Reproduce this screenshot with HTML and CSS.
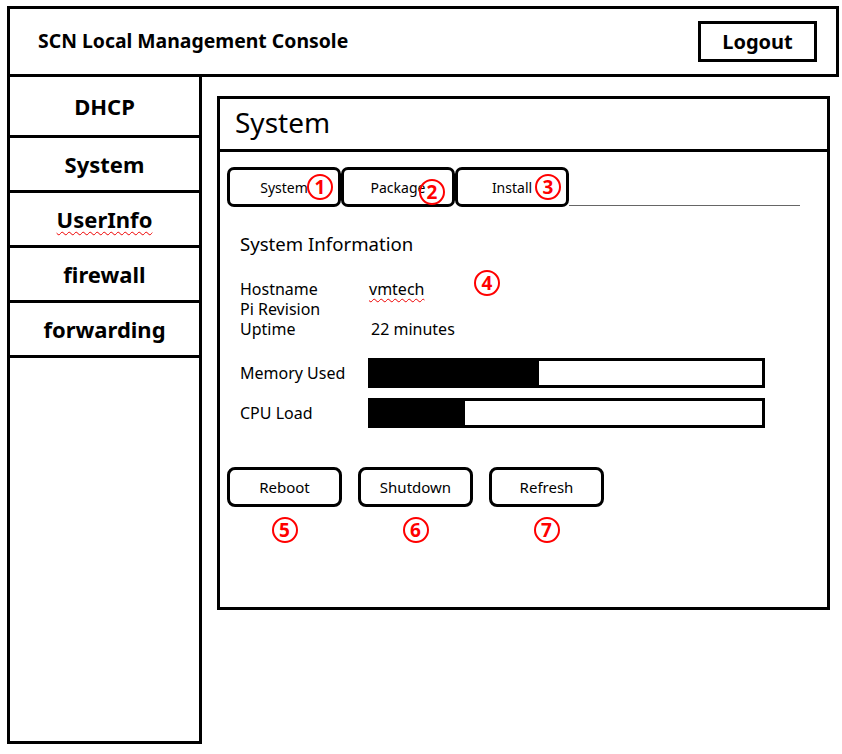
FILE: index.html
```html
<!DOCTYPE html>
<html lang="en">
<head>
    <meta charset="UTF-8">
    <meta name="viewport" content="width=device-width, initial-scale=1.0">
    <title>SCN Local Management Console</title>
    <link rel="stylesheet" href="styles.css">
</head>
<body>
    <div class="page">
        <div class="header">
            <div class="brand">SCN Local Management Console</div>
            <button class="logout">Logout</button>
        </div>
        <div class="layout">
            <div class="sidebar">
                <a class="nav-item nav-first">DHCP</a>
                <a class="nav-item">System</a>
                <a class="nav-item"><span class="misspelled">UserInfo</span></a>
                <a class="nav-item">firewall</a>
                <a class="nav-item">forwarding</a>
            </div>
            <div class="panel">
                <div class="panel-title">System</div>
                <div class="panel-body">
                    <div class="tabs">
                        <div class="tab">System<span class="mark">1</span></div>
                        <div class="tab">Package<span class="mark low">2</span></div>
                        <div class="tab">Install<span class="mark">3</span></div>
                        <div class="tab-line"></div>
                    </div>
                    <div class="info">
                        <h2>System Information</h2>
                        <div class="info-grid">
                            <span>Hostname</span><span><span class="misspelled">vmtech</span></span>
                            <span>Pi Revision</span><span></span>
                            <span>Uptime</span><span class="uptime">22 minutes</span>
                        </div>
                        <span class="mark info-mark">4</span>
                    </div>
                    <div class="usage">
                        <span>Memory Used</span>
                        <div class="bar"><div class="bar-fill" style="width: 43%"></div></div>
                        <span>CPU Load</span>
                        <div class="bar"><div class="bar-fill" style="width: 24%"></div></div>
                    </div>
                    <div class="actions">
                        <div class="action">
                            <button class="btn">Reboot</button>
                            <span class="mark">5</span>
                        </div>
                        <div class="action">
                            <button class="btn">Shutdown</button>
                            <span class="mark">6</span>
                        </div>
                        <div class="action">
                            <button class="btn">Refresh</button>
                            <span class="mark">7</span>
                        </div>
                    </div>
                </div>
            </div>
        </div>
    </div>
</body>
</html>
```

FILE: styles.css
```css
body {
    margin: 0;
    font-family: "Noto Sans", "Open Sans", sans-serif;
    color: #000;
    background: #fff;
}
.page {
    padding: 6px 0 0 7px;
    width: 832px;
}
.header {
    box-sizing: border-box;
    height: 71px;
    border: 3px solid #000;
    display: flex;
    align-items: center;
    justify-content: space-between;
    padding: 0 19px 0 28px;
}
.brand {
    font-size: 19.4px;
    font-weight: 700;
    margin-top: -3px;
}
.logout {
    box-sizing: border-box;
    width: 119px;
    height: 41px;
    padding: 0;
    border: 3px solid #000;
    background: #fff;
    color: #000;
    font-family: inherit;
    font-size: 20px;
    font-weight: 700;
}
.layout {
    display: flex;
    align-items: flex-start;
}
.sidebar {
    box-sizing: border-box;
    width: 195px;
    height: 667px;
    border: 3px solid #000;
    border-top: none;
    display: flex;
    flex-direction: column;
}
.nav-item {
    height: 52px;
    border-bottom: 3px solid #000;
    display: flex;
    align-items: center;
    justify-content: center;
    font-size: 22px;
    font-weight: 700;
}
.nav-first {
    height: 58px;
}
.misspelled {
    text-decoration: underline wavy #e00;
    text-decoration-thickness: 1px;
    text-underline-offset: 3px;
}
.panel {
    box-sizing: border-box;
    width: 613px;
    height: 514px;
    margin: 19px 0 0 15px;
    border: 3px solid #000;
}
.panel-title {
    height: 50px;
    line-height: 46px;
    padding-left: 15px;
    border-bottom: 3px solid #000;
    font-size: 28px;
}
.panel-body {
    padding: 15px 0 0 7px;
}
.tabs {
    display: flex;
    align-items: flex-end;
}
.tab {
    position: relative;
    box-sizing: border-box;
    width: 114px;
    height: 40px;
    border: 3px solid #000;
    border-radius: 7px;
    display: flex;
    align-items: center;
    justify-content: center;
    font-size: 14px;
}
.tab-line {
    width: 231px;
    margin-bottom: 1px;
    border-bottom: 1px solid #666;
}
.mark {
    box-sizing: border-box;
    width: 26px;
    height: 26px;
    border: 2px solid #f00;
    border-radius: 50%;
    display: inline-flex;
    align-items: center;
    justify-content: center;
    color: #f00;
    font-size: 19px;
    font-weight: 700;
    line-height: 1;
}
.tab .mark {
    position: absolute;
    left: 77px;
    top: 4px;
}
.tab .mark.low {
    left: 75px;
    top: 9px;
}
.info {
    position: relative;
    margin: 25px 0 0 13px;
}
.info h2 {
    margin: 0;
    font-size: 18.6px;
    font-weight: 400;
    line-height: 24px;
}
.info-grid {
    display: grid;
    grid-template-columns: 129px auto;
    margin-top: 23px;
    font-size: 16px;
    line-height: 20px;
}
.uptime {
    padding-left: 2px;
}
.info-mark {
    position: absolute;
    left: 234px;
    top: 38px;
}
.usage {
    display: grid;
    grid-template-columns: 128px 397px;
    row-gap: 10px;
    align-items: center;
    margin: 19px 0 0 13px;
    font-size: 16px;
}
.bar {
    box-sizing: border-box;
    height: 30px;
    border: 3px solid #000;
}
.bar-fill {
    height: 100%;
    background: #000;
}
.actions {
    display: flex;
    gap: 16px;
    margin-top: 39px;
}
.action {
    display: flex;
    flex-direction: column;
    align-items: center;
    gap: 10px;
}
.btn {
    box-sizing: border-box;
    width: 115px;
    height: 40px;
    border: 3px solid #000;
    border-radius: 8px;
    background: #fff;
    color: #000;
    font-family: inherit;
    font-size: 15px;
}
```
